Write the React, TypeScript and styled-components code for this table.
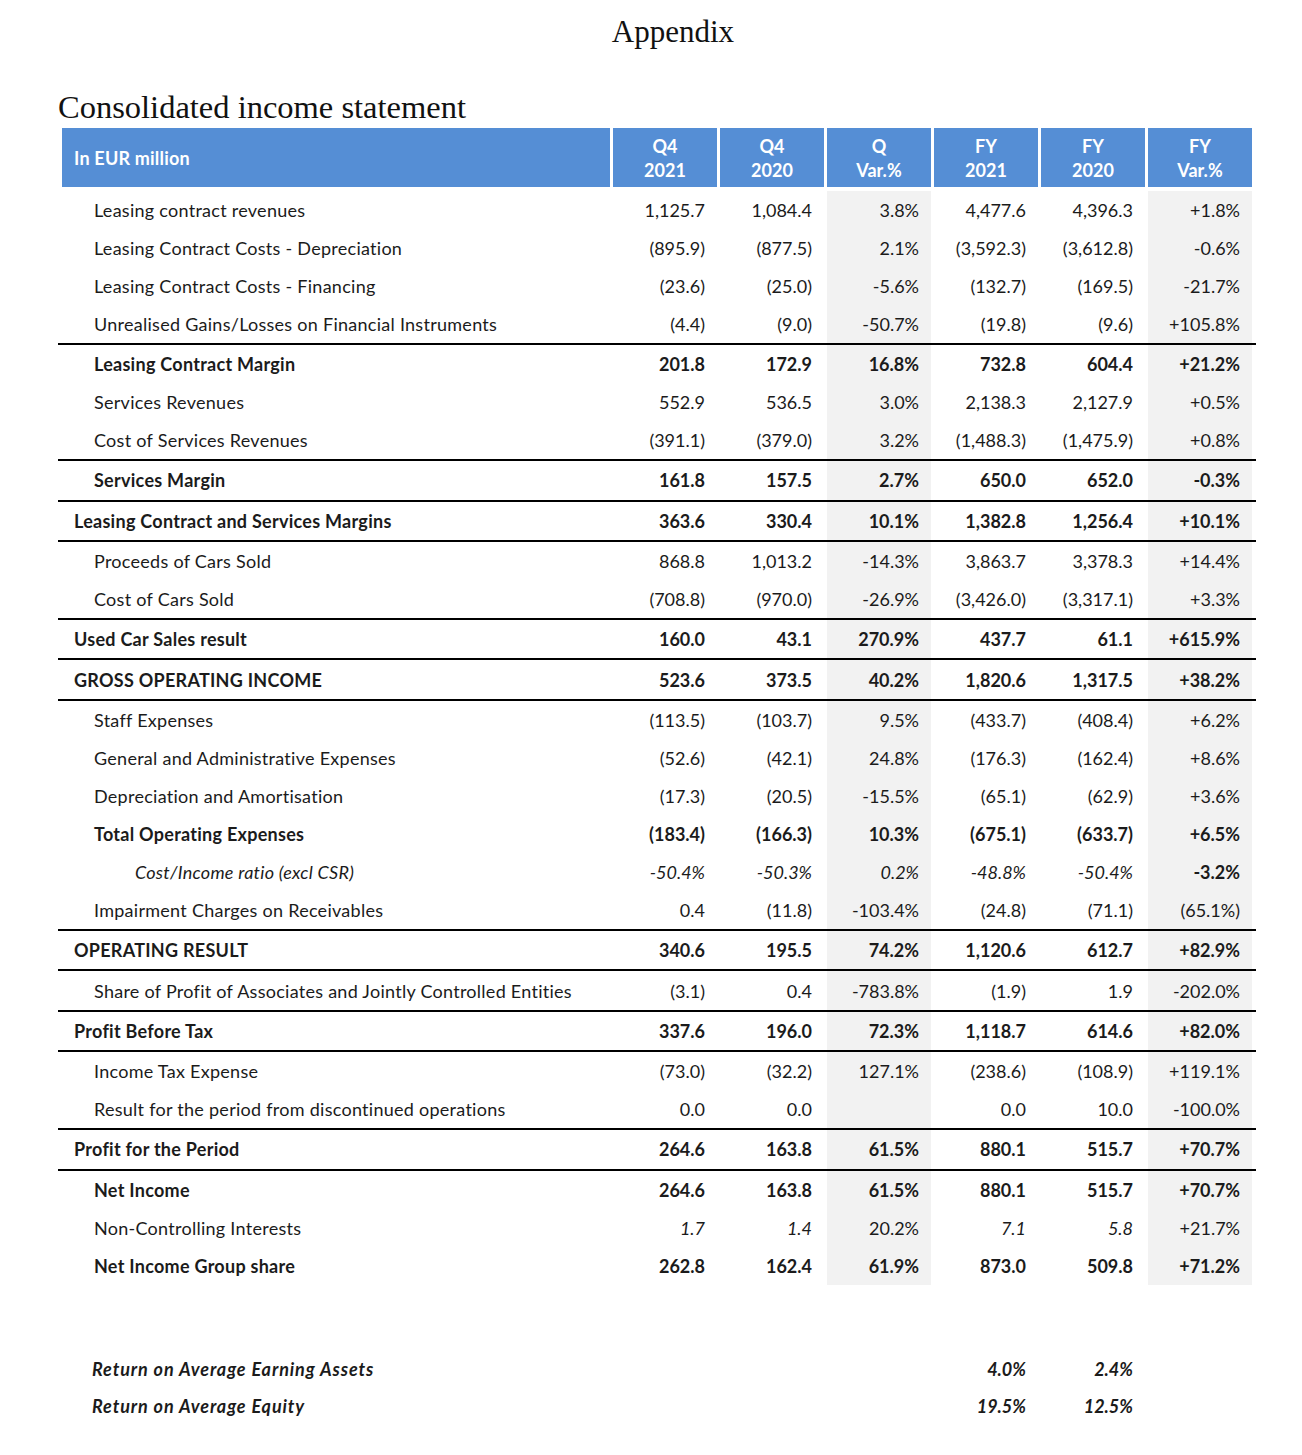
import React from "react";
import styled, { createGlobalStyle } from "styled-components";

const GlobalStyle = createGlobalStyle`
  html, body { margin: 0; padding: 0; background: #ffffff; }
  body { font-family: Lato, "Open Sans", "Noto Sans", sans-serif; color: #1b1b1b; }
`;

const Page = styled.div`
  width: 1302px;
  min-height: 1455px;
  box-sizing: border-box;
  padding: 12px 0 0 62px;
`;

const Heading = styled.h1`
  margin: 0;
  width: 1222px;
  text-align: center;
  font-family: "Liberation Serif", "Times New Roman", serif;
  font-weight: 400;
  font-size: 31px;
  line-height: 40px;
  color: #111;
`;

const SubHeading = styled.h2`
  margin: 37px 0 3px -4px;
  font-family: "Liberation Serif", "Times New Roman", serif;
  font-weight: 400;
  font-size: 32.5px;
  line-height: 36px;
  color: #111;
`;

const Grid = styled.div`
  display: grid;
  grid-template-columns: 548px repeat(6, 104px);
  column-gap: 3px;
  width: 1190px;
`;

const HeaderRow = styled(Grid)`
  height: 59px;
`;

const HeadLabel = styled.div`
  background: #558ed5;
  color: #fff;
  font-weight: 700;
  font-size: 18px;
  letter-spacing: 0.2px;
  display: flex;
  align-items: center;
  padding-left: 12px;
`;

const HeadCell = styled.div`
  background: #558ed5;
  color: #fff;
  font-weight: 700;
  font-size: 18px;
  line-height: 24px;
  display: flex;
  flex-direction: column;
  align-items: center;
  justify-content: center;
`;

const Row = styled(Grid)<{ $sep?: boolean; $lead?: boolean }>`
  box-sizing: border-box;
  height: ${(p) => (p.$lead ? 42 : p.$sep ? 40.3 : 38)}px;
  padding-top: ${(p) => (p.$lead ? 4 : 0)}px;
  border-top: ${(p) => (p.$sep ? "2px solid #000" : "none")};
  margin: 0 -4px;
  padding-left: 4px;
  padding-right: 4px;
  width: 1198px;
`;

const Label = styled.div<{ $level: number; $bold?: boolean; $italic?: boolean }>`
  display: flex;
  align-items: center;
  padding-left: ${(p) => (p.$level === 0 ? 12 : p.$level === 1 ? 32 : 73)}px;
  font-size: 18px;
  letter-spacing: 0.27px;
  font-weight: ${(p) => (p.$bold ? 700 : 400)};
  font-style: ${(p) => (p.$italic ? "italic" : "normal")};
  white-space: nowrap;
`;

const RatioLabel = styled.div`
  display: flex;
  align-items: center;
  padding-left: 30px;
  font-size: 18px;
  letter-spacing: 0.9px;
  font-weight: 700;
  font-style: italic;
  white-space: nowrap;
`;

const Cell = styled.div<{ $shade?: boolean; $bold?: boolean; $italic?: boolean }>`
  display: flex;
  align-items: center;
  justify-content: flex-end;
  padding-right: 12px;
  font-size: 18px;
  font-weight: ${(p) => (p.$bold ? 700 : 400)};
  font-style: ${(p) => (p.$italic ? "italic" : "normal")};
  background: ${(p) => (p.$shade ? "#f2f2f2" : "transparent")};
  white-space: nowrap;
`;

const Ratios = styled.div`
  margin-top: 66px;
`;

const RatioRow = styled(Grid)`
  height: 37px;
`;

type Style = "n" | "b" | "i" | "bi";

interface RowData {
  label: string;
  level: number;
  bold?: boolean;
  italic?: boolean;
  sep?: boolean;
  values: string[];
  styles?: Style[];
}

const rows: RowData[] = [
  { label: "Leasing contract revenues", level: 1, values: ["1,125.7", "1,084.4", "3.8%", "4,477.6", "4,396.3", "+1.8%"] },
  { label: "Leasing Contract Costs - Depreciation", level: 1, values: ["(895.9)", "(877.5)", "2.1%", "(3,592.3)", "(3,612.8)", "-0.6%"] },
  { label: "Leasing Contract Costs - Financing", level: 1, values: ["(23.6)", "(25.0)", "-5.6%", "(132.7)", "(169.5)", "-21.7%"] },
  { label: "Unrealised Gains/Losses on Financial Instruments", level: 1, values: ["(4.4)", "(9.0)", "-50.7%", "(19.8)", "(9.6)", "+105.8%"] },
  { label: "Leasing Contract Margin", level: 1, bold: true, sep: true, values: ["201.8", "172.9", "16.8%", "732.8", "604.4", "+21.2%"] },
  { label: "Services Revenues", level: 1, values: ["552.9", "536.5", "3.0%", "2,138.3", "2,127.9", "+0.5%"] },
  { label: "Cost of Services Revenues", level: 1, values: ["(391.1)", "(379.0)", "3.2%", "(1,488.3)", "(1,475.9)", "+0.8%"] },
  { label: "Services Margin", level: 1, bold: true, sep: true, values: ["161.8", "157.5", "2.7%", "650.0", "652.0", "-0.3%"] },
  { label: "Leasing Contract and Services Margins", level: 0, bold: true, sep: true, values: ["363.6", "330.4", "10.1%", "1,382.8", "1,256.4", "+10.1%"] },
  { label: "Proceeds of Cars Sold", level: 1, sep: true, values: ["868.8", "1,013.2", "-14.3%", "3,863.7", "3,378.3", "+14.4%"] },
  { label: "Cost of Cars Sold", level: 1, values: ["(708.8)", "(970.0)", "-26.9%", "(3,426.0)", "(3,317.1)", "+3.3%"] },
  { label: "Used Car Sales result", level: 0, bold: true, sep: true, values: ["160.0", "43.1", "270.9%", "437.7", "61.1", "+615.9%"] },
  { label: "GROSS OPERATING INCOME", level: 0, bold: true, sep: true, values: ["523.6", "373.5", "40.2%", "1,820.6", "1,317.5", "+38.2%"] },
  { label: "Staff Expenses", level: 1, sep: true, values: ["(113.5)", "(103.7)", "9.5%", "(433.7)", "(408.4)", "+6.2%"] },
  { label: "General and Administrative Expenses", level: 1, values: ["(52.6)", "(42.1)", "24.8%", "(176.3)", "(162.4)", "+8.6%"] },
  { label: "Depreciation and Amortisation", level: 1, values: ["(17.3)", "(20.5)", "-15.5%", "(65.1)", "(62.9)", "+3.6%"] },
  { label: "Total Operating Expenses", level: 1, bold: true, values: ["(183.4)", "(166.3)", "10.3%", "(675.1)", "(633.7)", "+6.5%"] },
  {
    label: "Cost/Income ratio (excl CSR)",
    level: 2,
    italic: true,
    values: ["-50.4%", "-50.3%", "0.2%", "-48.8%", "-50.4%", "-3.2%"],
    styles: ["i", "i", "i", "i", "i", "b"],
  },
  { label: "Impairment Charges on Receivables", level: 1, values: ["0.4", "(11.8)", "-103.4%", "(24.8)", "(71.1)", "(65.1%)"] },
  { label: "OPERATING RESULT", level: 0, bold: true, sep: true, values: ["340.6", "195.5", "74.2%", "1,120.6", "612.7", "+82.9%"] },
  { label: "Share of Profit of Associates and Jointly Controlled Entities", level: 1, sep: true, values: ["(3.1)", "0.4", "-783.8%", "(1.9)", "1.9", "-202.0%"] },
  { label: "Profit Before Tax", level: 0, bold: true, sep: true, values: ["337.6", "196.0", "72.3%", "1,118.7", "614.6", "+82.0%"] },
  { label: "Income Tax Expense", level: 1, sep: true, values: ["(73.0)", "(32.2)", "127.1%", "(238.6)", "(108.9)", "+119.1%"] },
  { label: "Result for the period from discontinued operations", level: 1, values: ["0.0", "0.0", "", "0.0", "10.0", "-100.0%"] },
  { label: "Profit for the Period", level: 0, bold: true, sep: true, values: ["264.6", "163.8", "61.5%", "880.1", "515.7", "+70.7%"] },
  { label: "Net Income", level: 1, bold: true, sep: true, values: ["264.6", "163.8", "61.5%", "880.1", "515.7", "+70.7%"] },
  {
    label: "Non-Controlling Interests",
    level: 1,
    values: ["1.7", "1.4", "20.2%", "7.1", "5.8", "+21.7%"],
    styles: ["i", "i", "n", "i", "i", "n"],
  },
  { label: "Net Income Group share", level: 1, bold: true, values: ["262.8", "162.4", "61.9%", "873.0", "509.8", "+71.2%"] },
];

const headers: [string, string][] = [
  ["Q4", "2021"],
  ["Q4", "2020"],
  ["Q", "Var.%"],
  ["FY", "2021"],
  ["FY", "2020"],
  ["FY", "Var.%"],
];

const shaded = [false, false, true, false, false, true];

const ratios: { label: string; fy21: string; fy20: string }[] = [
  { label: "Return on Average Earning Assets", fy21: "4.0%", fy20: "2.4%" },
  { label: "Return on Average Equity", fy21: "19.5%", fy20: "12.5%" },
];

export default function App() {
  return (
    <>
      <GlobalStyle />
      <Page>
        <Heading>Appendix</Heading>
        <SubHeading>Consolidated income statement</SubHeading>
        <HeaderRow>
          <HeadLabel>In EUR million</HeadLabel>
          {headers.map(([a, b], i) => (
            <HeadCell key={i}>
              <span>{a}</span>
              <span>{b}</span>
            </HeadCell>
          ))}
        </HeaderRow>
        {rows.map((r, ri) => (
          <Row key={ri} $sep={r.sep} $lead={ri === 0}>
            <Label $level={r.level} $bold={r.bold} $italic={r.italic}>
              {r.label}
            </Label>
            {r.values.map((v, ci) => {
              const st: Style = r.styles ? r.styles[ci] : r.bold ? "b" : "n";
              return (
                <Cell
                  key={ci}
                  $shade={shaded[ci]}
                  $bold={st === "b" || st === "bi"}
                  $italic={st === "i" || st === "bi"}
                >
                  {v}
                </Cell>
              );
            })}
          </Row>
        ))}
        <Ratios>
          {ratios.map((r, i) => (
            <RatioRow key={i}>
              <RatioLabel>{r.label}</RatioLabel>
              <Cell />
              <Cell />
              <Cell />
              <Cell $bold $italic>
                {r.fy21}
              </Cell>
              <Cell $bold $italic>
                {r.fy20}
              </Cell>
              <Cell />
            </RatioRow>
          ))}
        </Ratios>
      </Page>
    </>
  );
}
